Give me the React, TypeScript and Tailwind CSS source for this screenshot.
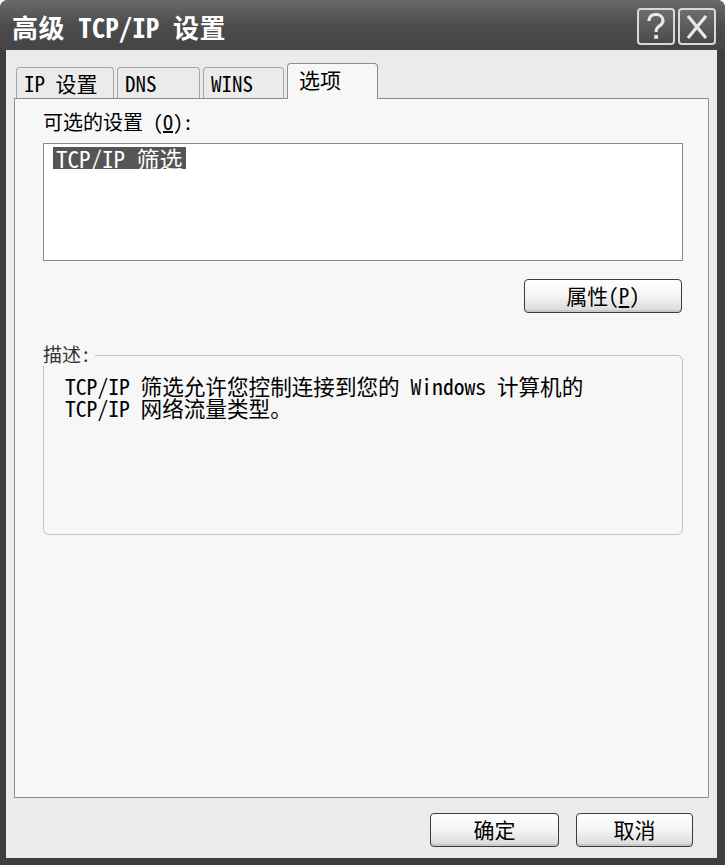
import React from "react";

const FONT = {
  fontFamily:
    '"Noto Sans Mono CJK SC", "Noto Sans CJK SC", "Liberation Mono", monospace',
};

function Tab({ label, active, w }: { label: string; active?: boolean; w: string }) {
  if (active) {
    return (
      <div
        className={`${w} h-[36px] -mb-px bg-[#f7f7f7] border border-b-0 border-[#8e8e8e] rounded-t-[4px] flex items-start justify-start pl-[11px] pt-[2px] text-[21px] leading-[26px] text-black relative z-10`}
      >
        {label}
      </div>
    );
  }
  return (
    <div
      className={`${w} h-[31px] bg-[#ebebeb] border border-b-0 border-[#a6a6a6] rounded-t-[4px] flex items-center pl-[7px] text-[21px] leading-[24px] text-black`}
    >
      {label}
    </div>
  );
}

function Btn({ children, w }: { children: React.ReactNode; w: string }) {
  return (
    <div
      className={`${w} h-[34px] rounded-[4px] border border-[#3c3c3c] bg-gradient-to-b from-[#ffffff] via-[#f4f4f4] to-[#d9d9d9] flex items-center justify-center text-[21px] text-black shadow-[inset_0_-2px_0_#c8c8c8]`}
    >
      {children}
    </div>
  );
}

export default function App() {
  return (
    <div className="w-[725px] h-[865px] bg-white" style={FONT}>
      <div className="w-[725px] h-[865px] flex flex-col bg-[#3e3e3e] rounded-t-[8px] overflow-hidden">
        {/* Title bar */}
        <div className="h-[50px] flex items-center justify-between pl-[12px] pr-[9px] bg-gradient-to-b from-[#6a6a6a] via-[#4c4c4c] to-[#444444]">
          <div className="text-white text-[26px] font-bold tracking-[0.5px] pt-[3px]">
            高级 TCP/IP 设置
          </div>
          <div className="flex gap-[3px] pt-[3px]">
            <div className="w-[38px] h-[37px] rounded-[4px] border-2 border-[#d8d8d8] bg-gradient-to-b from-[#6e6e6e] to-[#4a4a4a] flex items-center justify-center">
              <svg width="22" height="28" viewBox="0 0 22 28">
                <path
                  d="M4 8 C4 3 8 1.5 11 1.5 C15 1.5 18 4 18 7.5 C18 11 15 12.5 13 14 C11.5 15.2 11 16.5 11 19"
                  fill="none"
                  stroke="#e8e8e8"
                  strokeWidth="3.2"
                />
                <rect x="9.2" y="22" width="3.8" height="3.8" fill="#e8e8e8" />
              </svg>
            </div>
            <div className="w-[38px] h-[37px] rounded-[4px] border-2 border-[#d8d8d8] bg-gradient-to-b from-[#6e6e6e] to-[#4a4a4a] flex items-center justify-center">
              <svg width="24" height="26" viewBox="0 0 24 26">
                <path d="M3 2 L21 24 M21 2 L3 24" stroke="#e8e8e8" strokeWidth="3.2" fill="none" />
              </svg>
            </div>
          </div>
        </div>

        {/* Client */}
        <div className="flex-1 mx-[6px] mb-[7px] mr-[8px] bg-[#ebebeb] flex flex-col px-[8px] pt-[12px]">
          {/* Tabs */}
          <div className="flex items-end gap-[3px] pl-[2px] h-[36px]">
            <Tab label="IP 设置" w="w-[98px]" />
            <Tab label="DNS" w="w-[83px]" />
            <Tab label="WINS" w="w-[81px]" />
            <Tab label="选项" w="w-[91px]" active />
          </div>
          {/* Panel */}
          <div className="h-[700px] bg-[#f7f7f7] border border-[#8e8e8e] flex flex-col pl-[28px] pr-[25px]">
            <div className="pt-[11px] text-[20px] leading-[24px] text-black">
              可选的设置 (<span className="underline">O</span>):
            </div>
            <div className="mt-[9px] h-[118px] bg-white border border-[#8a8a8a] pl-[9px] pt-[3px]">
              <span className="inline-block bg-[#555555] text-white text-[23px] leading-[22px] px-[3px]">
                TCP/IP 筛选
              </span>
            </div>
            <div className="mt-[18px] flex justify-end mr-[1px]">
              <Btn w="w-[158px]">
                属性(<span className="underline">P</span>)
              </Btn>
            </div>
            {/* Group box */}
            <div className="mt-[42px] relative h-[180px] border border-[#c4c4c4] rounded-[6px]">
              <div className="absolute left-[-1px] top-[-14px] bg-[#f7f7f7] pr-[4px] text-[19px] leading-[24px] text-[#333]">
                描述:
              </div>
              <div className="pl-[21px] pt-[19px] text-[21.6px] leading-[22px] text-black">
                <div>TCP/IP 筛选允许您控制连接到您的 Windows 计算机的</div>
                <div>TCP/IP 网络流量类型。</div>
              </div>
            </div>
          </div>
          {/* Bottom buttons */}
          <div className="flex justify-end gap-[17px] mt-[15px] pr-[16px]">
            <Btn w="w-[129px]">确定</Btn>
            <Btn w="w-[117px]">取消</Btn>
          </div>
        </div>
      </div>
    </div>
  );
}
